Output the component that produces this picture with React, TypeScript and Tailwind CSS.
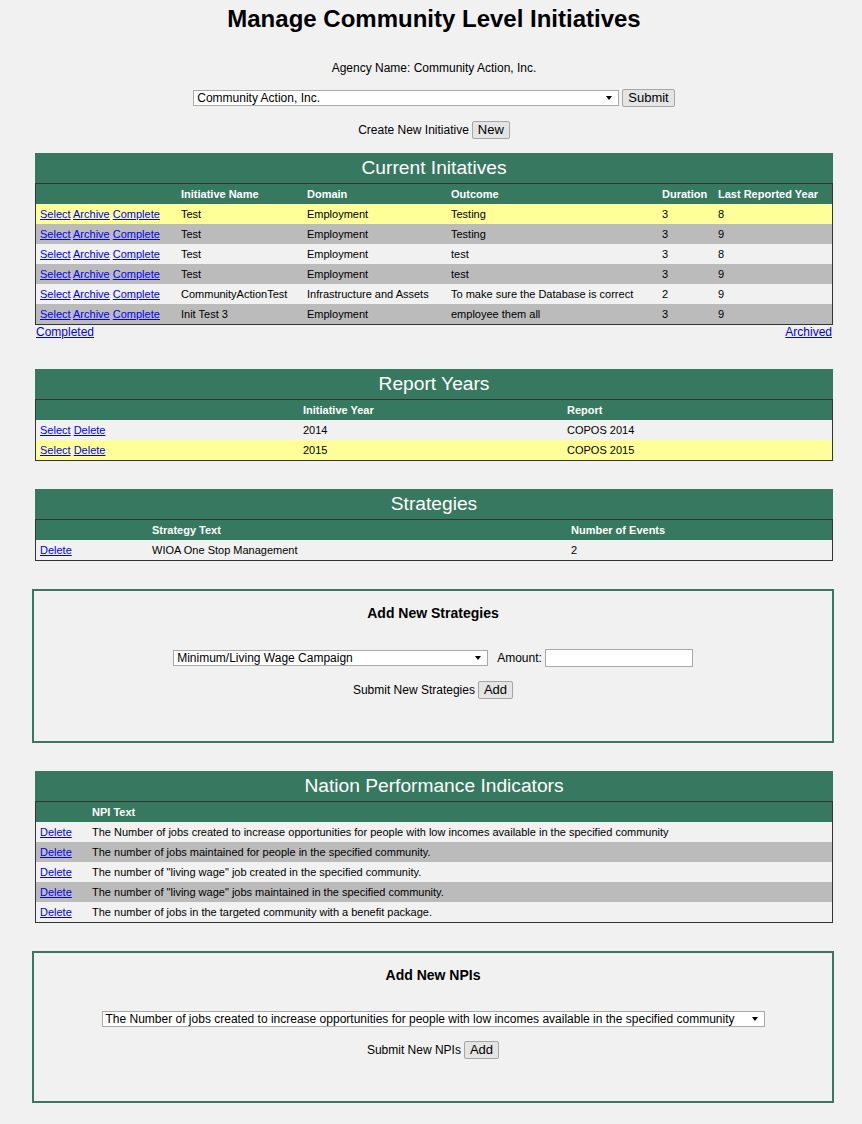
import React from 'react';

type Tone = 'yellow' | 'gray' | 'light';

interface Column {
  label: string;
  width: string;
}

interface Row {
  tone: Tone;
  cells: React.ReactNode[];
}

const toneClass: Record<Tone, string> = {
  yellow: 'bg-[#ffff99]',
  gray: 'bg-[#bbbbbb]',
  light: 'bg-[#f0f1f0]',
};

const A: React.FC<{ children: React.ReactNode }> = ({ children }) => (
  <a href="#" className="text-[#0000ee] underline">
    {children}
  </a>
);

const Links: React.FC<{ items: string[] }> = ({ items }) => (
  <>
    {items.map((item, i) => (
      <React.Fragment key={item}>
        {i > 0 && ' '}
        <A>{item}</A>
      </React.Fragment>
    ))}
  </>
);

const Arrow = () => (
  <svg width="6" height="4" viewBox="0 0 6 4" className="shrink-0">
    <polygon points="0,0 6,0 3,4" fill="#000" />
  </svg>
);

const FakeSelect: React.FC<{ value: string; className: string }> = ({ value, className }) => (
  <div
    className={`flex items-center justify-between gap-[6px] bg-white border border-[#a9a9a9] pl-[3px] pr-[6px] text-[12px] leading-[14px] text-black whitespace-nowrap ${className}`}
  >
    <span>{value}</span>
    <Arrow />
  </div>
);

const Button: React.FC<{ children: React.ReactNode }> = ({ children }) => (
  <button className="h-[18px] px-[5px] bg-[#e4e4e4] border border-[#a6a6a6] rounded-[2px] text-[13px] leading-[14px] text-black">
    {children}
  </button>
);

const DataTable: React.FC<{ title: string; columns: Column[]; rows: Row[] }> = ({ title, columns, rows }) => (
  <div>
    <div className="h-[30px] bg-[#367960] text-white text-[19.2px] leading-[22px] flex items-center justify-center">
      {title}
    </div>
    <table className="w-full table-fixed border-separate border-spacing-0 border border-[#333333]">
      <colgroup>
        {columns.map((c, i) => (
          <col key={i} className={c.width} />
        ))}
      </colgroup>
      <thead>
        <tr className="bg-[#367960]">
          {columns.map((c, i) => (
            <th key={i} className="h-[20px] p-0 px-[4px] text-left text-[11px] leading-[13px] font-bold text-white whitespace-nowrap">
              {c.label}
            </th>
          ))}
        </tr>
      </thead>
      <tbody>
        {rows.map((r, ri) => (
          <tr key={ri} className={toneClass[r.tone]}>
            {r.cells.map((cell, ci) => (
              <td key={ci} className="h-[20px] p-0 px-[4px] text-[11px] leading-[13px] text-black whitespace-nowrap overflow-hidden">
                {cell}
              </td>
            ))}
          </tr>
        ))}
      </tbody>
    </table>
  </div>
);

const initiativeLinks = <Links items={['Select', 'Archive', 'Complete']} />;

const initiatives: Row[] = [
  { tone: 'yellow', cells: [initiativeLinks, 'Test', 'Employment', 'Testing', '3', '8'] },
  { tone: 'gray', cells: [initiativeLinks, 'Test', 'Employment', 'Testing', '3', '9'] },
  { tone: 'light', cells: [initiativeLinks, 'Test', 'Employment', 'test', '3', '8'] },
  { tone: 'gray', cells: [initiativeLinks, 'Test', 'Employment', 'test', '3', '9'] },
  { tone: 'light', cells: [initiativeLinks, 'CommunityActionTest', 'Infrastructure and Assets', 'To make sure the Database is correct', '2', '9'] },
  { tone: 'gray', cells: [initiativeLinks, 'Init Test 3', 'Employment', 'employee them all', '3', '9'] },
];

const yearLinks = <Links items={['Select', 'Delete']} />;

const years: Row[] = [
  { tone: 'light', cells: [yearLinks, '2014', 'COPOS 2014'] },
  { tone: 'yellow', cells: [yearLinks, '2015', 'COPOS 2015'] },
];

const npiText = [
  'The Number of jobs created to increase opportunities for people with low incomes available in the specified community',
  'The number of jobs maintained for people in the specified community.',
  'The number of "living wage" job created in the specified community.',
  'The number of "living wage" jobs maintained in the specified community.',
  'The number of jobs in the targeted community with a benefit package.',
];

const npis: Row[] = npiText.map((t, i) => ({
  tone: i % 2 === 1 ? 'gray' : 'light',
  cells: [<A>Delete</A>, t],
}));

export default function App() {
  return (
    <div className="min-h-[1124px] bg-[#f0f1f0] font-['Liberation_Sans',Arial,sans-serif] text-black pb-[21px]">
      <div className="ml-[35px] w-[798px]">
        <h1 className="pt-[5px] h-[33px] text-[24px] leading-[28px] font-bold text-center">
          Manage Community Level Initiatives
        </h1>

        <p className="mt-[28px] text-[12px] leading-[14px] text-center">Agency Name: Community Action, Inc.</p>

        <div className="mt-[14px] flex items-center justify-center gap-[3px]">
          <FakeSelect value="Community Action, Inc." className="w-[426px] h-[16px]" />
          <Button>Submit</Button>
        </div>

        <div className="mt-[14px] flex items-center justify-center gap-[3px] text-[12px] leading-[14px]">
          <span>Create New Initiative</span>
          <Button>New</Button>
        </div>

        <div className="mt-[14px]">
          <DataTable
            title="Current Initatives"
            columns={[
              { label: '', width: 'w-[141px]' },
              { label: 'Initiative Name', width: 'w-[126px]' },
              { label: 'Domain', width: 'w-[144px]' },
              { label: 'Outcome', width: 'w-[211px]' },
              { label: 'Duration', width: 'w-[56px]' },
              { label: 'Last Reported Year', width: 'w-auto' },
            ]}
            rows={initiatives}
          />
          <div className="flex justify-between px-[1px] text-[12px] leading-[14px]">
            <A>Completed</A>
            <A>Archived</A>
          </div>
        </div>

        <div className="mt-[30px]">
          <DataTable
            title="Report Years"
            columns={[
              { label: '', width: 'w-[263px]' },
              { label: 'Initiative Year', width: 'w-[264px]' },
              { label: 'Report', width: 'w-auto' },
            ]}
            rows={years}
          />
        </div>

        <div className="mt-[28px]">
          <DataTable
            title="Strategies"
            columns={[
              { label: '', width: 'w-[112px]' },
              { label: 'Strategy Text', width: 'w-[419px]' },
              { label: 'Number of Events', width: 'w-auto' },
            ]}
            rows={[{ tone: 'light', cells: [<A>Delete</A>, 'WIOA One Stop Management', '2'] }]}
          />
        </div>

        <div className="mt-[28px] -ml-[3px] w-[802px] border-2 border-[#367960] pt-[14px] pb-[42px]">
          <h3 className="text-[14px] leading-[16px] font-bold text-center">Add New Strategies</h3>
          <div className="mt-[28px] flex items-center justify-center text-[12px] leading-[14px]">
            <FakeSelect value="Minimum/Living Wage Campaign" className="w-[315px] h-[16px]" />
            <span className="ml-[9px]">Amount:</span>
            <input className="ml-[3px] w-[148px] h-[18px] bg-white border border-[#a9a9a9]" />
          </div>
          <div className="mt-[14px] flex items-center justify-center gap-[3px] text-[12px] leading-[14px]">
            <span>Submit New Strategies</span>
            <Button>Add</Button>
          </div>
        </div>

        <div className="mt-[28px]">
          <DataTable
            title="Nation Performance Indicators"
            columns={[
              { label: '', width: 'w-[52px]' },
              { label: 'NPI Text', width: 'w-auto' },
            ]}
            rows={npis}
          />
        </div>

        <div className="mt-[28px] -ml-[3px] w-[802px] border-2 border-[#367960] pt-[14px] pb-[42px]">
          <h3 className="text-[14px] leading-[16px] font-bold text-center">Add New NPIs</h3>
          <div className="mt-[28px] flex justify-center">
            <FakeSelect value={npiText[0]} className="w-[663px] h-[16px]" />
          </div>
          <div className="mt-[14px] flex items-center justify-center gap-[3px] text-[12px] leading-[14px]">
            <span>Submit New NPIs</span>
            <Button>Add</Button>
          </div>
        </div>
      </div>
    </div>
  );
}
